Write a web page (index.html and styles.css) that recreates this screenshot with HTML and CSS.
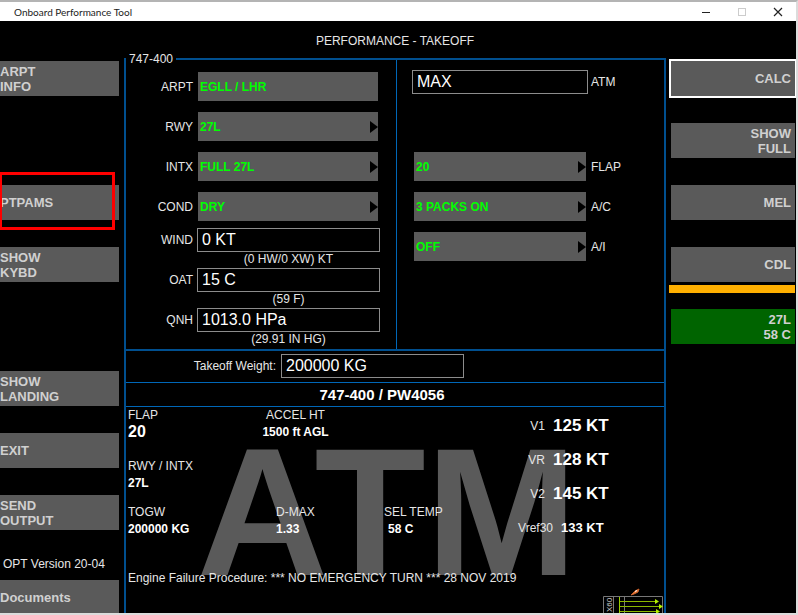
FILE: index.html
```
<!DOCTYPE html>
<html lang="en">
<head>
    <meta charset="UTF-8">
    <meta name="viewport" content="width=device-width, initial-scale=1.0">
    <title>Onboard Performance Tool</title>
    <link rel="stylesheet" href="styles.css">
</head>
<body>
    <div class="window">
        <header class="titlebar">
            <span class="titlebar-text">Onboard Performance Tool</span>
            <button class="win-btn" aria-label="Minimize">
                <svg width="10" height="10" viewBox="0 0 10 10"><path d="M1 5.5h8" stroke="#222"/></svg>
            </button>
            <button class="win-btn" aria-label="Maximize" disabled>
                <svg width="10" height="10" viewBox="0 0 10 10"><rect x="1.5" y="1.5" width="7" height="7" fill="none" stroke="#ccc"/></svg>
            </button>
            <button class="win-btn" aria-label="Close">
                <svg width="10" height="10" viewBox="0 0 10 10"><path d="M1 1l8 8M9 1l-8 8" stroke="#222" stroke-width="1.2"/></svg>
            </button>
        </header>

        <main class="app">
            <nav class="side side-left">
                <button class="side-btn row-1">ARPT<br>INFO</button>
                <button class="side-btn row-3 highlighted">PTPAMS</button>
                <button class="side-btn row-4">SHOW<br>KYBD</button>
                <button class="side-btn row-6">SHOW<br>LANDING</button>
                <button class="side-btn row-7">EXIT</button>
                <button class="side-btn row-8">SEND<br>OUTPUT</button>
                <div class="side-footer">
                    <div class="version">OPT Version 20-04</div>
                    <button class="side-btn">Documents</button>
                </div>
            </nav>

            <section class="center">
                <h1 class="page-title">PERFORMANCE - TAKEOFF</h1>
                <fieldset class="panel">
                    <legend>747-400</legend>

                    <div class="panes">
                        <div class="pane pane-left">
                            <div class="field">
                                <label for="arpt">ARPT</label>
                                <button class="pick" id="arpt">EGLL / LHR</button>
                            </div>
                            <div class="field">
                                <label for="rwy">RWY</label>
                                <select class="pick" id="rwy"><option>27L</option></select>
                            </div>
                            <div class="field">
                                <label for="intx">INTX</label>
                                <select class="pick" id="intx"><option>FULL 27L</option></select>
                            </div>
                            <div class="field">
                                <label for="cond">COND</label>
                                <select class="pick" id="cond"><option>DRY</option></select>
                            </div>
                            <div class="entry">
                                <label for="wind">WIND</label>
                                <input class="text-box" type="text" id="wind" value="0 KT">
                                <span class="hint">(0 HW/0 XW) KT</span>
                            </div>
                            <div class="entry">
                                <label for="oat">OAT</label>
                                <input class="text-box" type="text" id="oat" value="15 C">
                                <span class="hint">(59 F)</span>
                            </div>
                            <div class="entry">
                                <label for="qnh">QNH</label>
                                <input class="text-box" type="text" id="qnh" value="1013.0 HPa">
                                <span class="hint">(29.91 IN HG)</span>
                            </div>
                        </div>

                        <div class="pane pane-right">
                            <div class="field field-atm">
                                <input class="text-box" type="text" id="atm" value="MAX">
                                <label for="atm">ATM</label>
                            </div>
                            <div class="field">
                                <select class="pick" id="flap"><option>20</option></select>
                                <label for="flap">FLAP</label>
                            </div>
                            <div class="field">
                                <select class="pick" id="ac"><option>3 PACKS ON</option></select>
                                <label for="ac">A/C</label>
                            </div>
                            <div class="field">
                                <select class="pick" id="ai"><option>OFF</option></select>
                                <label for="ai">A/I</label>
                            </div>
                        </div>
                    </div>

                    <div class="weight">
                        <label for="tow">Takeoff Weight:</label>
                        <input class="text-box" type="text" id="tow" value="200000 KG">
                    </div>

                    <h2 class="engine">747-400 / PW4056</h2>

                    <div class="results">
                        <div class="watermark" aria-hidden="true">ATM</div>
                        <div class="stats">
                            <div class="stat"><span>FLAP</span><b class="big">20</b></div>
                            <div class="stat stat-accel"><span>ACCEL HT</span><b>1500 ft AGL</b></div>
                            <div class="stat stat-rwy"><span>RWY / INTX</span><b>27L</b></div>
                            <div class="stat stat-togw"><span>TOGW</span><b>200000 KG</b></div>
                            <div class="stat stat-dmax"><span>D-MAX</span><b>1.33</b></div>
                            <div class="stat stat-temp"><span>SEL TEMP</span><b>58 C</b></div>
                        </div>
                        <div class="speeds">
                            <div class="speed"><span>V1</span><b>125 KT</b></div>
                            <div class="speed"><span>VR</span><b>128 KT</b></div>
                            <div class="speed"><span>V2</span><b>145 KT</b></div>
                            <div class="speed speed-ref"><span>Vref30</span><b>133 KT</b></div>
                        </div>
                        <p class="procedure">Engine Failure Procedure: *** NO EMERGENCY TURN *** 28 NOV 2019</p>
                        <svg class="runway" width="60" height="40" viewBox="0 0 60 40">
                            <path d="M28 7l4-4 4-2 -1 3 -4 2z" fill="#f08040" stroke="#c8602a" stroke-width="1"/>
                            <path d="M32 3.500l2-1" stroke="#fff"/>
                            <path d="M.5 40V8.500h59V40M10.500 8.500V40M21.500 8.500V40" fill="none" stroke="#777"/>
                            <path d="M16.500 9v31" stroke="#9acd00"/>
                            <path d="M17 13.500h36M17 18.500h40M17 23.500h37" stroke="#8ab800"/>
                            <path d="M52 11l4 2.500-4 2.500zM56 16l4 2.500-4 2.500zM53 21l4 2.500-4 2.500z" fill="#b4f000"/>
                            <text x="-24" y="9" transform="rotate(-90)" class="runway-text">X60</text>
                        </svg>
                    </div>
                </fieldset>
            </section>

            <nav class="side side-right">
                <button class="side-btn row-1 focused">CALC</button>
                <button class="side-btn row-2">SHOW<br>FULL</button>
                <button class="side-btn row-3">MEL</button>
                <button class="side-btn row-4 flagged">CDL</button>
                <button class="side-btn row-5 active">27L<br>58 C</button>
            </nav>
        </main>
    </div>
</body>
</html>
```
FILE: styles.css
```
* {
    box-sizing: border-box;
}
body {
    margin: 0;
    background-color: #e4e4e4;
    color: #e6e6e6;
    font-family: "Liberation Sans", Arial, sans-serif;
    font-size: 12px;
    line-height: 14px;
}
button,
input,
select {
    margin: 0;
    border: none;
    border-radius: 0;
    font-family: inherit;
}
.window {
    display: flex;
    flex-direction: column;
    height: 100vh;
    border-top: 2px solid #b4b4b4;
    border-right: 2px solid #dcdcdc;
    border-bottom: 2px solid #dcdcdc;
    overflow: hidden;
}

/* title bar */
.titlebar {
    display: flex;
    flex-shrink: 0;
    align-items: center;
    height: 19px;
    padding-left: 14px;
    background-color: #fff;
    color: #222;
}
.titlebar-text {
    flex: 1;
    font-family: Lato, "Segoe UI", sans-serif;
    font-size: 10px;
}
.win-btn {
    display: flex;
    align-items: center;
    justify-content: center;
    width: 36px;
    height: 19px;
    padding: 0;
    background: none;
}

.app {
    display: grid;
    flex: 1;
    grid-template-columns: 119px 1fr 124px;
    grid-template-rows: 100%;
    column-gap: 5px;
    min-height: 0;
    padding-right: 1px;
    background-color: #000;
}

/* side keys */
.side {
    display: grid;
    grid-auto-rows: 35px;
    align-content: start;
    row-gap: 27px;
    padding-top: 40px;
}
.side-btn {
    position: relative;
    width: 100%;
    height: 35px;
    padding: 0;
    background-color: #5a5a5a;
    color: #d0d0d0;
    font-size: 13px;
    font-weight: bold;
    line-height: 15px;
    text-align: left;
    cursor: pointer;
}
.side-right .side-btn {
    padding-right: 4px;
    text-align: right;
}
.row-1 { grid-row: 1; }
.row-2 { grid-row: 2; }
.row-3 { grid-row: 3; }
.row-4 { grid-row: 4; }
.row-5 { grid-row: 5; }
.row-6 { grid-row: 6; }
.row-7 { grid-row: 7; }
.row-8 { grid-row: 8; }
.side-footer {
    grid-row: 9;
}
.version {
    padding: 0 0 9px 3px;
}
.highlighted::after {
    content: "";
    position: absolute;
    inset: -13px 4px -10px -1px;
    border: 3px solid #f00;
}
.focused {
    outline: 2px solid #fff;
}
.flagged::after {
    content: "";
    position: absolute;
    top: 38px;
    right: 0;
    left: -2px;
    height: 8px;
    background-color: #ffb000;
}
.side-btn.active {
    background-color: #006400;
}

/* main panel */
.center {
    display: flex;
    flex-direction: column;
    min-width: 0;
    min-height: 0;
    padding-top: 13px;
}
.page-title {
    margin: 0 0 4px;
    font-size: 12px;
    font-weight: normal;
    text-align: center;
}
.panel {
    display: flex;
    flex: 1;
    flex-direction: column;
    min-width: 0;
    min-height: 0;
    margin: 0;
    padding: 0;
    border: 2px solid #004f8f;
    border-bottom: none;
}
.panel legend {
    padding: 0 3px;
}
.panes {
    display: grid;
    grid-template-columns: 271fr 267fr;
    margin-top: -6px;
    border-bottom: 2px solid #004f8f;
}
.pane {
    display: flex;
    flex-direction: column;
}
.pane-left {
    gap: 11px;
    padding: 12px 16px 3px 0;
    border-right: 1px solid #0067b8;
}
.pane-right {
    gap: 11px;
    padding: 10px 0 0 15px;
}
.field,
.entry {
    display: grid;
    align-items: center;
}
.pane-left .field,
.entry {
    grid-template-columns: 67px 1fr;
    column-gap: 4px;
}
.pane-left label {
    text-align: right;
}
.pane-left .pick {
    margin: 0 2px 0 1px;
}
.entry {
    grid-template-rows: 24px 14px;
}
.field + .entry {
    margin-top: -4px;
}
.entry + .entry {
    margin-top: -9px;
}
.pane-right .field {
    grid-template-columns: 1fr 73px;
    column-gap: 3px;
}
.pane-right .pick {
    margin: 0 2px;
}
.pane-right .field-atm {
    margin-bottom: 47px;
}
.pick {
    height: 29px;
    padding: 0 2px;
    background-color: #5a5a5a;
    color: #0f0;
    font-size: 12px;
    font-weight: bold;
    text-align: left;
    cursor: pointer;
}
select.pick {
    appearance: none;
    background-image: url("data:image/svg+xml,%3Csvg xmlns='http://www.w3.org/2000/svg' width='8' height='12'%3E%3Cpath d='M0 0l8 6-8 6z'/%3E%3C/svg%3E");
    background-repeat: no-repeat;
    background-position: right center;
}
.text-box {
    min-width: 0;
    width: 100%;
    height: 24px;
    padding: 0 4px;
    border: 1px solid #8c8c8c;
    background-color: #000;
    color: #fff;
    font-size: 16px;
}
.hint {
    grid-column: 2;
    text-align: center;
}
.weight {
    display: grid;
    grid-template-columns: 150px 183px;
    align-items: center;
    column-gap: 5px;
    padding: 3px 0 4px;
    border-bottom: 1px solid #0067b8;
    text-align: right;
}
.engine {
    margin: 0;
    padding: 4px 26px 3px 0;
    border-bottom: 1px solid #0067b8;
    color: #fff;
    font-size: 15px;
    line-height: 16px;
    text-align: center;
}

/* takeoff results */
.results {
    position: relative;
    display: grid;
    flex: 1;
    grid-template-columns: 1fr 150px;
    align-content: start;
    min-height: 0;
    padding: 1px 0 0 2px;
    overflow: hidden;
}
.watermark {
    position: absolute;
    top: 14px;
    right: 0;
    left: 0;
    padding-right: 16px;
    color: #5a5a5a;
    font-size: 182px;
    font-weight: bold;
    line-height: 182px;
    text-align: center;
}
.stats,
.speeds,
.procedure,
.runway {
    z-index: 1;
}
.stats {
    display: grid;
    grid-template-columns: 134px 122px 1fr;
    grid-template-rows: 51px 46px 34px;
}
.stat {
    display: flex;
    flex-direction: column;
}
.stat b,
.speed b {
    color: #fff;
}
.stat b {
    line-height: 20px;
}
.stat .big {
    font-size: 16px;
}
.stat-accel {
    width: 67px;
    align-items: center;
    white-space: nowrap;
}
.stat-rwy {
    grid-row: 2;
}
.stat-togw {
    grid-row: 3;
    grid-column: 1;
}
.stat-dmax {
    grid-row: 3;
    padding-left: 14px;
}
.stat-temp {
    grid-row: 3;
}
.stat-temp b {
    padding-left: 4px;
}
.speeds {
    padding-top: 1px;
}
.speed {
    display: grid;
    grid-template-columns: 31px 1fr;
    align-items: center;
    column-gap: 8px;
    height: 34px;
    text-align: right;
}
.speed b {
    font-size: 17px;
    text-align: left;
}
.speed-ref {
    grid-template-columns: 39px 1fr;
}
.speed-ref b {
    font-size: 13px;
}
.procedure {
    grid-column: 1 / 3;
    margin: 0;
    padding-top: 26px;
}
.runway {
    grid-column: 2;
    justify-self: end;
    margin: 3px 1px 0 0;
}
.runway-text {
    fill: #ccc;
    font-size: 8px;
}
```
